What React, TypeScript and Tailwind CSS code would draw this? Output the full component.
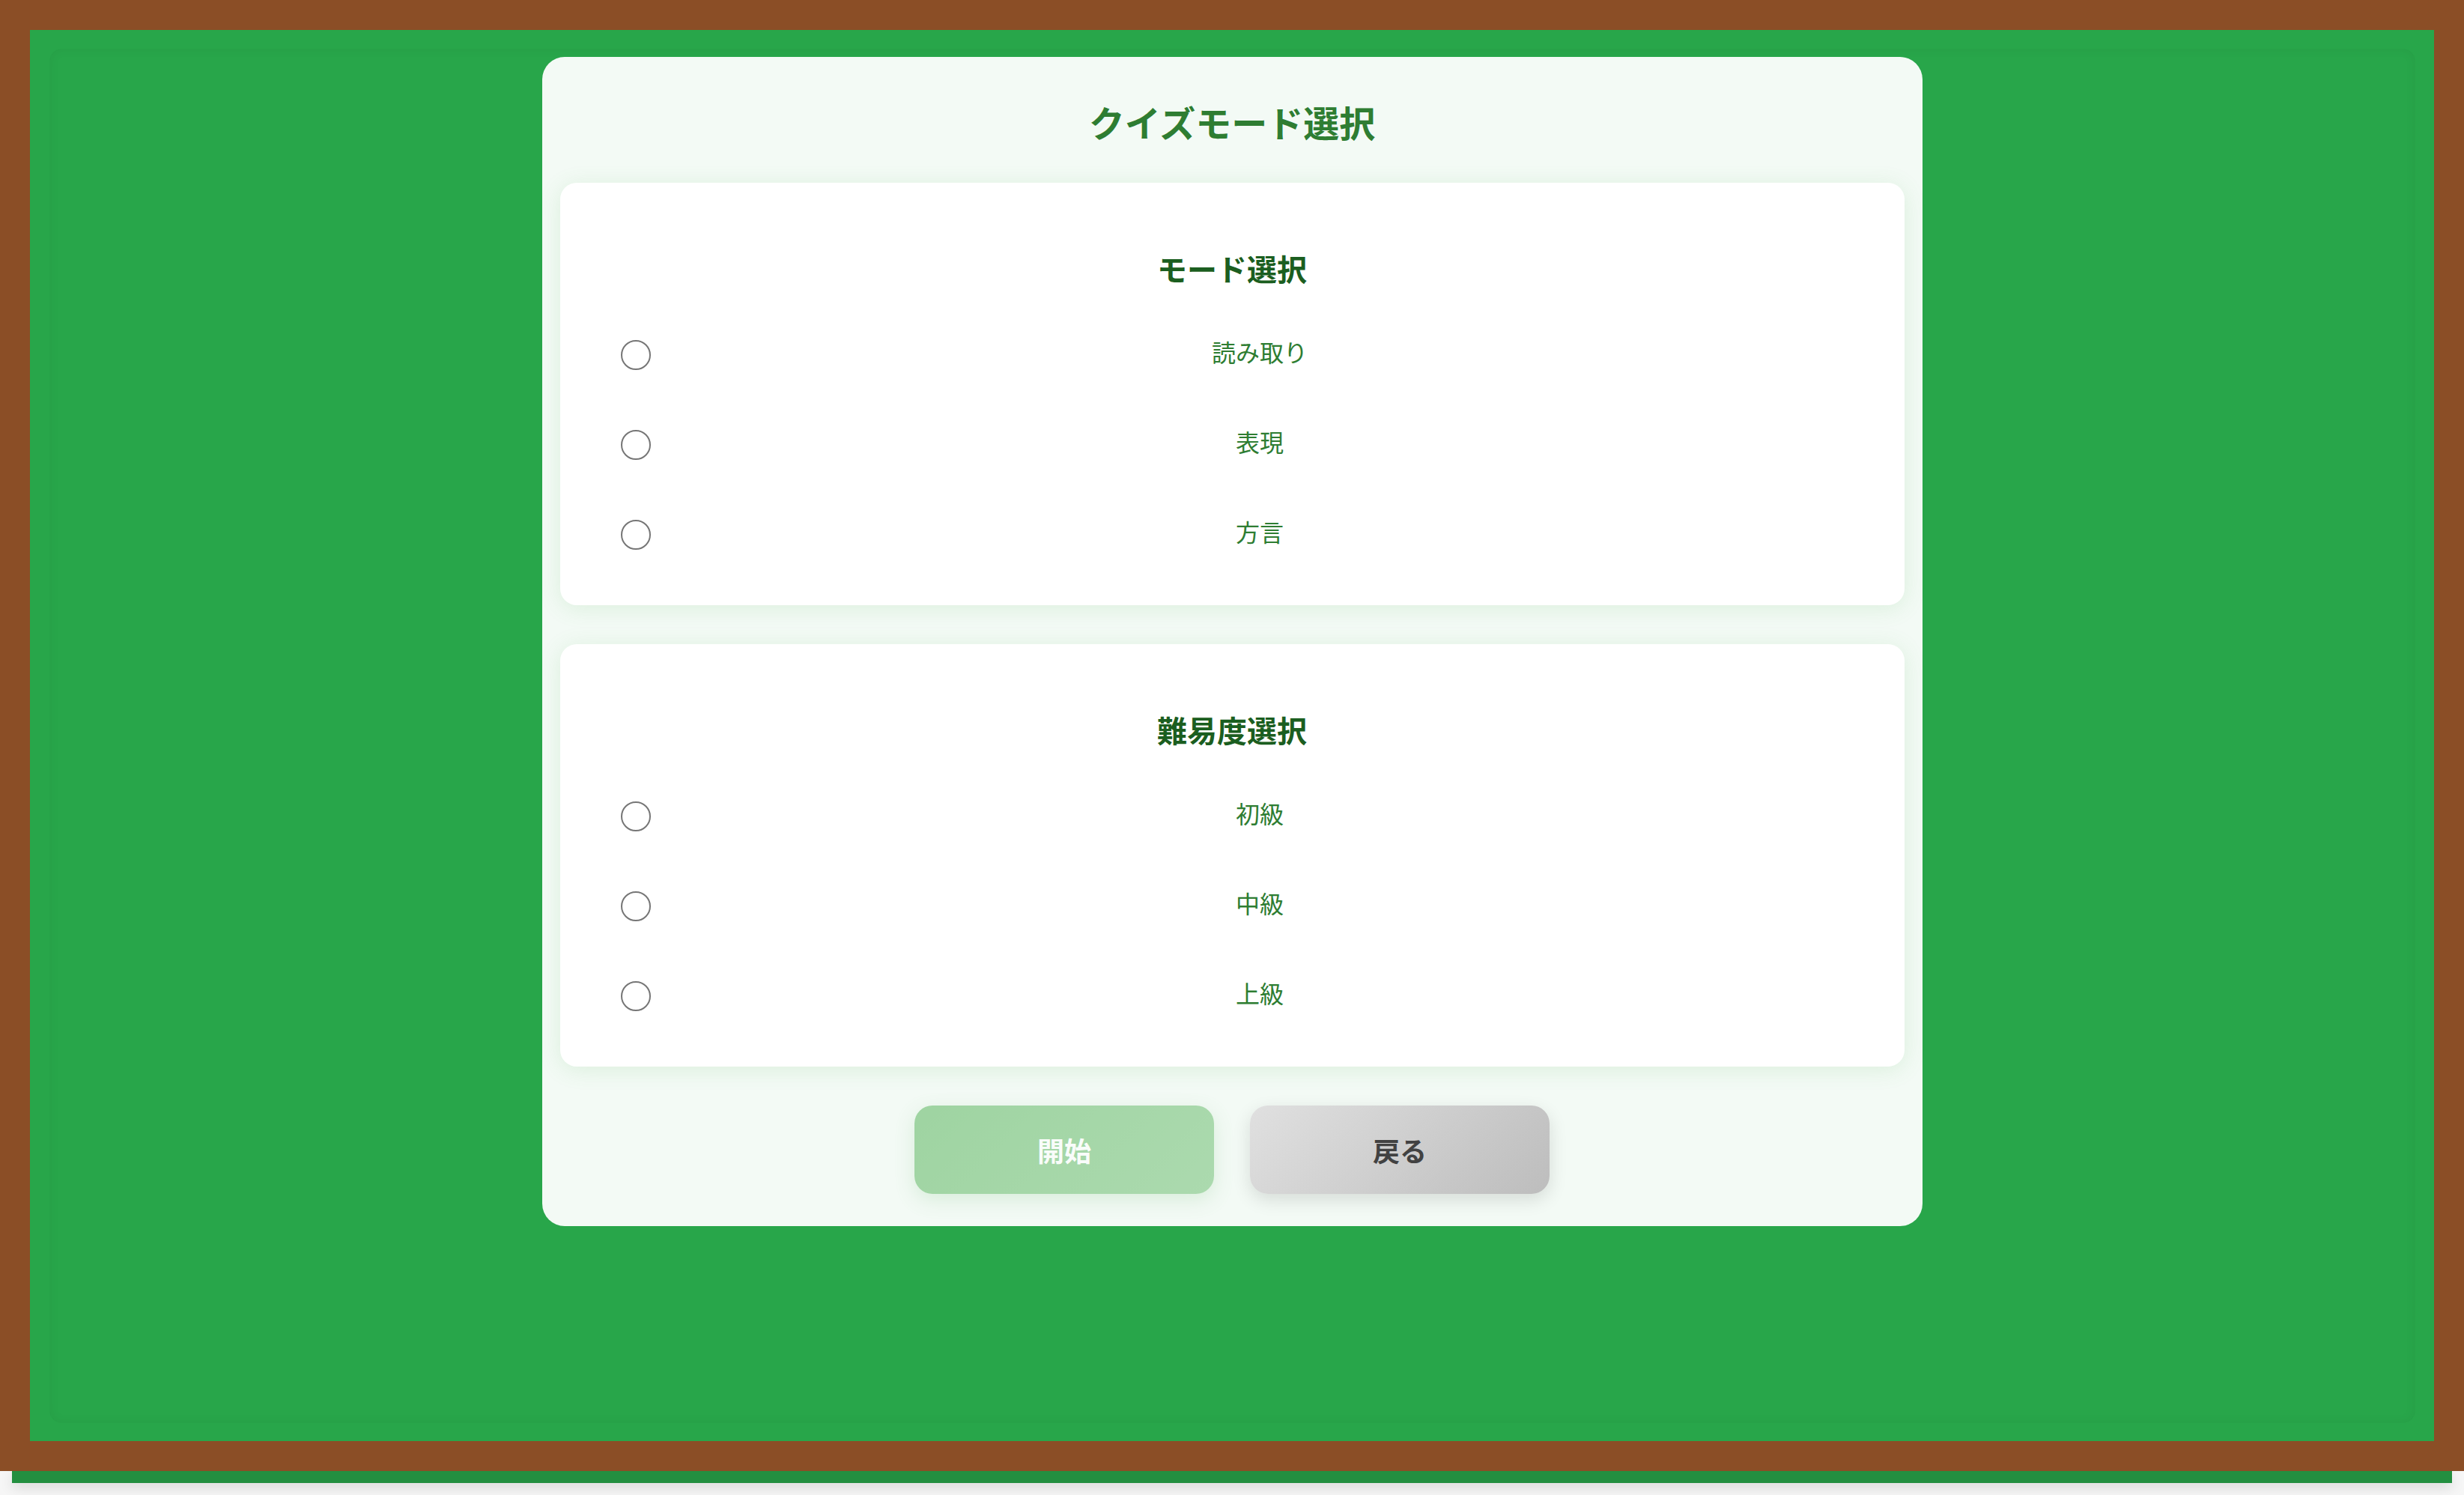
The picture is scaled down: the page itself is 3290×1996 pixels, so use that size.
import React, { useState } from 'react';

const font = { fontFamily: '"Noto Sans CJK JP", "Noto Sans", sans-serif' };

interface OptionGroupProps {
  title: string;
  name: string;
  options: string[];
  value: string;
  onChange: (val: string) => void;
}

const OptionGroup: React.FC<OptionGroupProps> = ({ title, options, value, onChange }) => {
  return (
    <section className="bg-white rounded-[22px] shadow-[0_4px_30px_rgba(76,175,80,0.14)] pt-[84px] pb-[36px]">
      <h3 className="text-center text-[40px] leading-[60px] font-bold text-[#1b5e20]">{title}</h3>
      <div className="mt-[24px] px-[81px]">
        {options.map((opt) => {
          const checked = opt === value;
          return (
            <label key={opt} className="flex items-center h-[120px] cursor-pointer" onClick={() => onChange(opt)}>
              {/* radio */}
              <span
                className={`w-[40px] h-[40px] mt-[4px] shrink-0 rounded-full border-[2px] flex items-center justify-center ${
                  checked ? 'border-[#1976d2]' : 'border-[#767676]'
                }`}
              >
                {checked && <span className="w-[22px] h-[22px] rounded-full bg-[#1976d2]" />}
              </span>
              <span className="flex-1 ml-[34px] text-center text-[32px] leading-[48px] text-[#2e7d32] -mt-[6px]">{opt}</span>
            </label>
          );
        })}
      </div>
    </section>
  );
};

export default function App() {
  const [mode, setMode] = useState('');
  const [level, setLevel] = useState('');
  const ready = mode !== '' && level !== '';

  return (
    <div className="h-[1996px] overflow-hidden bg-[#f6f6f6]" style={font}>
      {/* Board */}
      <div className="relative h-[1964px] border-[40px] border-[#8b4e26] bg-[#28a64a] flex justify-center">
        <div className="absolute top-[25px] left-[26px] right-[25px] bottom-[24px] rounded-[16px] border border-black/[0.025] shadow-[inset_0_0_14px_rgba(0,0,0,0.05)] pointer-events-none" />

        {/* Card */}
        <div className="relative w-[1843px] self-start mt-[36px] bg-[#f3faf5] rounded-[30px] px-[24px] pt-[50px] pb-[43px]">
          <h2 className="text-center text-[48px] leading-[72px] font-bold text-[#2e7d32]">クイズモード選択</h2>

          <div className="mt-[46px] flex flex-col gap-[52px]">
            <OptionGroup title="モード選択" name="mode" options={['読み取り', '表現', '方言']} value={mode} onChange={setMode} />
            <OptionGroup title="難易度選択" name="level" options={['初級', '中級', '上級']} value={level} onChange={setLevel} />
          </div>

          <div className="mt-[52px] flex justify-center gap-[48px]">
            <button
              type="button"
              disabled={!ready}
              className={`w-[400px] h-[118px] rounded-[24px] bg-linear-135 from-[#4caf50] to-[#66bb6a] text-white text-[36px] font-bold shadow-[0_8px_24px_rgba(76,175,80,0.3)] ${
                ready ? 'cursor-pointer' : 'opacity-50'
              }`}
            >
              開始
            </button>
            <button
              type="button"
              className="w-[400px] h-[118px] rounded-[24px] bg-linear-135 from-[#e0e0e0] to-[#bdbdbd] text-[#424242] text-[36px] font-bold shadow-[0_8px_24px_rgba(0,0,0,0.12)] cursor-pointer"
            >
              戻る
            </button>
          </div>
        </div>
      </div>

      {/* Chalk tray */}
      <div className="mx-[16px] h-[16px] bg-[#238f40] shadow-[0_6px_18px_rgba(0,0,0,0.12)]" />
    </div>
  );
}
